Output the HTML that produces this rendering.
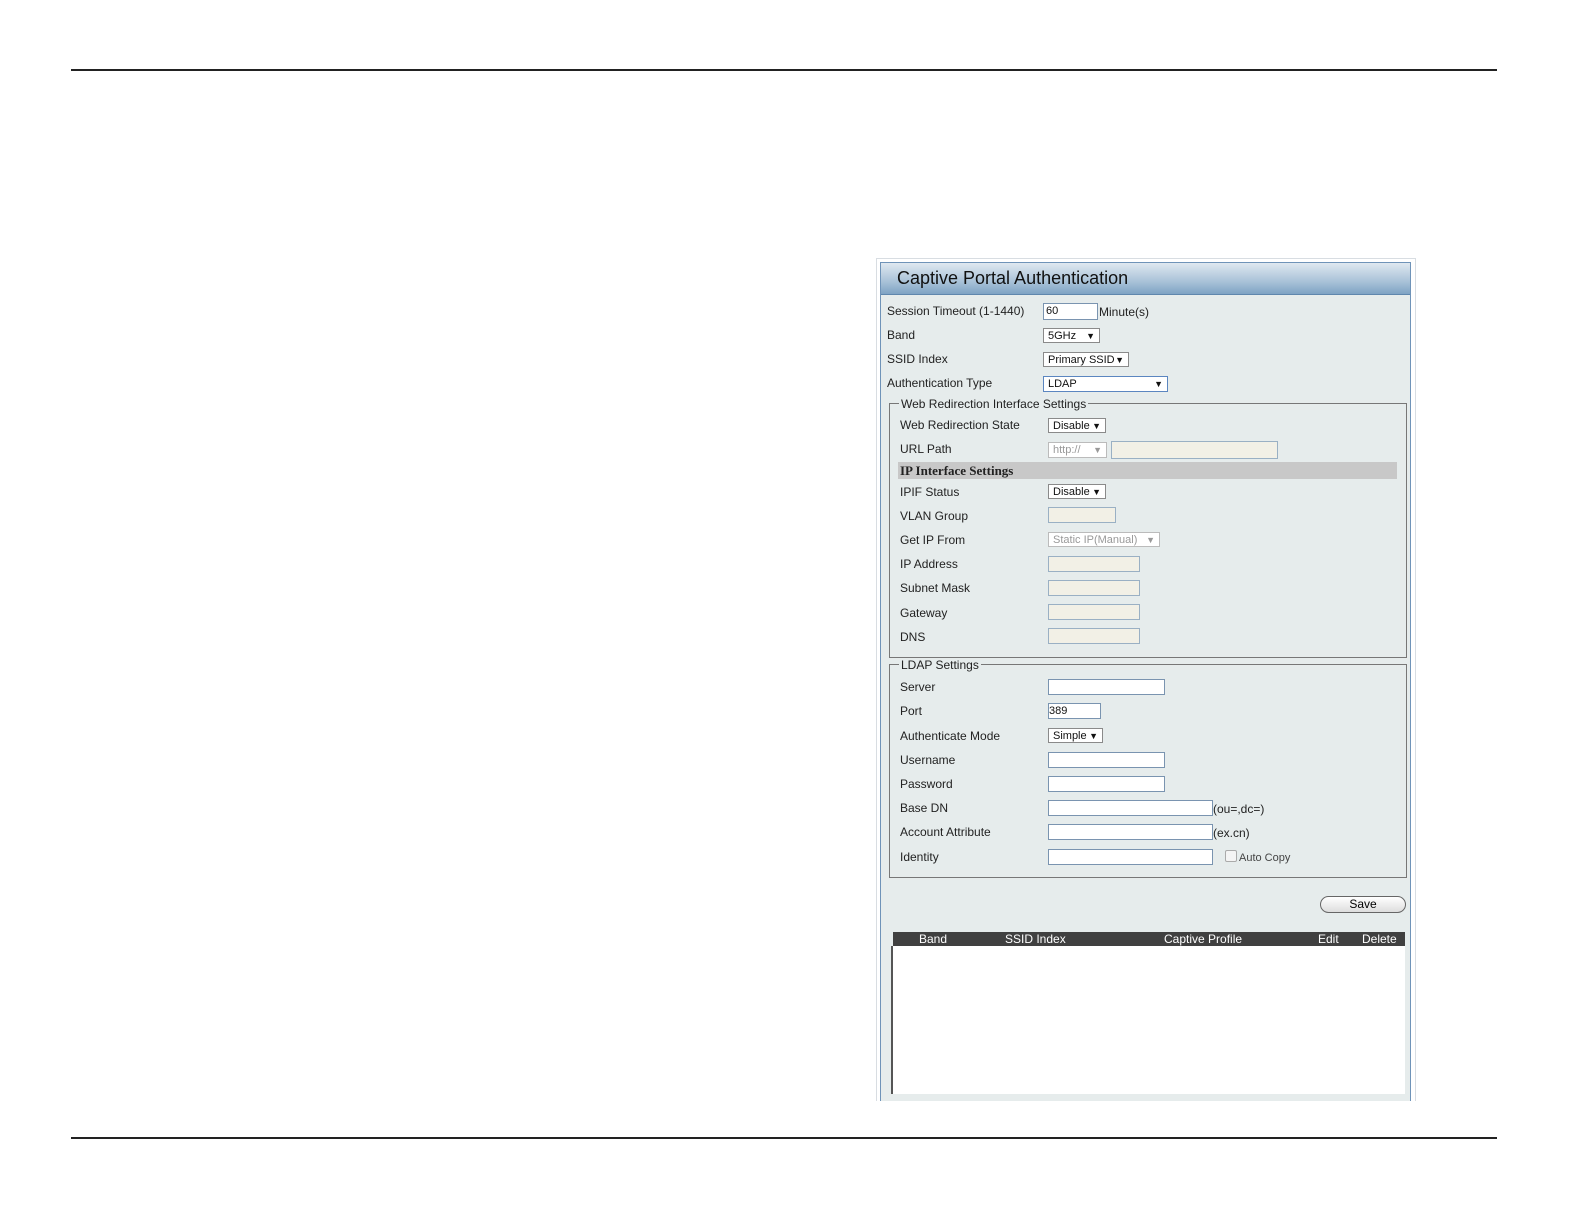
<!DOCTYPE html>
<html><head><meta charset="utf-8"><style>
body{margin:0;width:1584px;height:1224px;background:#fff;position:relative;font-family:"Liberation Sans",Arial,sans-serif;overflow:hidden}
.a{position:absolute}
.l{position:absolute;font-size:12px;color:#222;line-height:14px}
.i{position:absolute;background:#fff;border:1px solid #7a94b0;box-sizing:border-box;font-size:11px;line-height:15px;padding-left:2px;color:#111}
.d{position:absolute;background:#f2f0e6;border:1px solid #9ab0c4;box-sizing:border-box}
.s{position:absolute;background:#fff;border:1px solid #8a8a8a;box-sizing:border-box;font-size:11px;line-height:14px;padding-left:4px;color:#111}
.s b{position:absolute;right:4px;top:0;font-size:9px}
.sd{color:#999;border-color:#bbb}
</style></head><body>
<div class="a" style="left:71px;top:69px;width:1426px;height:2px;background:#222"></div>
<div class="a" style="left:71px;top:1137px;width:1426px;height:2px;background:#222"></div>

<div class="a" style="left:876px;top:258px;width:540px;height:843px;border:1px solid #d8dde2;border-bottom:none;box-sizing:border-box"></div>
<div class="a" style="left:880px;top:262px;width:531px;height:839px;border:1px solid #6f93b8;border-bottom:none;box-sizing:border-box;background:#e6ecec"></div>
<div class="a" style="left:881px;top:263px;width:529px;height:31px;background:linear-gradient(#dfe8f0,#a9c2d8 60%,#7ea3c4);border-bottom:1px solid #5f87ad"></div>
<div class="l" style="left:897px;top:268px;font-size:18px;line-height:20px;color:#111">Captive Portal Authentication</div>

<div class="l" style="left:887px;top:304px">Session Timeout (1-1440)</div>
<div class="i" style="left:1043px;top:303px;width:55px;height:17px">60</div>
<div class="l" style="left:1099px;top:305px">Minute(s)</div>
<div class="l" style="left:887px;top:328px">Band</div>
<div class="s" style="left:1043px;top:328px;width:57px;height:15px">5GHz<b>▼</b></div>
<div class="l" style="left:887px;top:352px">SSID Index</div>
<div class="s" style="left:1043px;top:352px;width:86px;height:15px">Primary SSID<b>▼</b></div>
<div class="l" style="left:887px;top:376px">Authentication Type</div>
<div class="s" style="left:1043px;top:376px;width:125px;height:16px;border-color:#5b86c0">LDAP<b>▼</b></div>

<div class="a" style="left:889px;top:403px;width:518px;height:255px;border:1px solid #777;box-sizing:border-box"></div>
<div class="l" style="left:899px;top:397px;background:#e6ecec;padding:0 2px">Web Redirection Interface Settings</div>
<div class="l" style="left:900px;top:418px">Web Redirection State</div>
<div class="s" style="left:1048px;top:418px;width:58px;height:15px">Disable<b>▼</b></div>
<div class="l" style="left:900px;top:442px">URL Path</div>
<div class="s sd" style="left:1048px;top:442px;width:59px;height:16px">http://<b>▼</b></div>
<div class="d" style="left:1111px;top:441px;width:167px;height:18px"></div>
<div class="a" style="left:898px;top:462px;width:499px;height:17px;background:#c8c8c8"></div>
<div class="l" style="left:900px;top:464px;font-family:'Liberation Serif',serif;font-weight:bold;font-size:13px">IP Interface Settings</div>
<div class="l" style="left:900px;top:485px">IPIF Status</div>
<div class="s" style="left:1048px;top:484px;width:58px;height:15px">Disable<b>▼</b></div>
<div class="l" style="left:900px;top:509px">VLAN Group</div>
<div class="d" style="left:1048px;top:507px;width:68px;height:16px"></div>
<div class="l" style="left:900px;top:533px">Get IP From</div>
<div class="s sd" style="left:1048px;top:532px;width:112px;height:15px">Static IP(Manual)<b>▼</b></div>
<div class="l" style="left:900px;top:557px">IP Address</div>
<div class="d" style="left:1048px;top:556px;width:92px;height:16px"></div>
<div class="l" style="left:900px;top:581px">Subnet Mask</div>
<div class="d" style="left:1048px;top:580px;width:92px;height:16px"></div>
<div class="l" style="left:900px;top:606px">Gateway</div>
<div class="d" style="left:1048px;top:604px;width:92px;height:16px"></div>
<div class="l" style="left:900px;top:630px">DNS</div>
<div class="d" style="left:1048px;top:628px;width:92px;height:16px"></div>

<div class="a" style="left:889px;top:664px;width:518px;height:214px;border:1px solid #777;box-sizing:border-box"></div>
<div class="l" style="left:899px;top:658px;background:#e6ecec;padding:0 2px">LDAP Settings</div>
<div class="l" style="left:900px;top:680px">Server</div>
<div class="i" style="left:1048px;top:679px;width:117px;height:16px"></div>
<div class="l" style="left:900px;top:704px">Port</div>
<div class="i" style="left:1048px;top:703px;width:53px;height:16px;padding-left:0;line-height:14px">389</div>
<div class="l" style="left:900px;top:729px">Authenticate Mode</div>
<div class="s" style="left:1048px;top:728px;width:55px;height:15px">Simple<b>▼</b></div>
<div class="l" style="left:900px;top:753px">Username</div>
<div class="i" style="left:1048px;top:752px;width:117px;height:16px"></div>
<div class="l" style="left:900px;top:777px">Password</div>
<div class="i" style="left:1048px;top:776px;width:117px;height:16px"></div>
<div class="l" style="left:900px;top:801px">Base DN</div>
<div class="i" style="left:1048px;top:800px;width:165px;height:16px"></div>
<div class="l" style="left:1213px;top:802px">(ou=,dc=)</div>
<div class="l" style="left:900px;top:825px">Account Attribute</div>
<div class="i" style="left:1048px;top:824px;width:165px;height:16px"></div>
<div class="l" style="left:1213px;top:826px">(ex.cn)</div>
<div class="l" style="left:900px;top:850px">Identity</div>
<div class="i" style="left:1048px;top:849px;width:165px;height:16px"></div>
<div class="a" style="left:1225px;top:850px;width:10px;height:10px;border:1px solid #aaa;border-radius:2px;background:#f4f4f4"></div>
<div class="l" style="left:1239px;top:851px;font-size:11px;color:#444">Auto Copy</div>

<div class="a" style="left:1320px;top:896px;width:86px;height:17px;border:1px solid #666;border-radius:9px;box-sizing:border-box;background:linear-gradient(#fff,#ddd);font-size:12px;text-align:center;line-height:15px">Save</div>

<div class="a" style="left:893px;top:932px;width:512px;height:14px;background:#404040;color:#fff;font-size:12px;line-height:14px">
<span class="a" style="left:26px">Band</span><span class="a" style="left:112px">SSID Index</span><span class="a" style="left:271px">Captive Profile</span><span class="a" style="left:425px">Edit</span><span class="a" style="left:469px">Delete</span></div>
<div class="a" style="left:891px;top:946px;width:514px;height:148px;background:#fff;border-left:2px solid #555;box-sizing:border-box"></div>
</body></html>
